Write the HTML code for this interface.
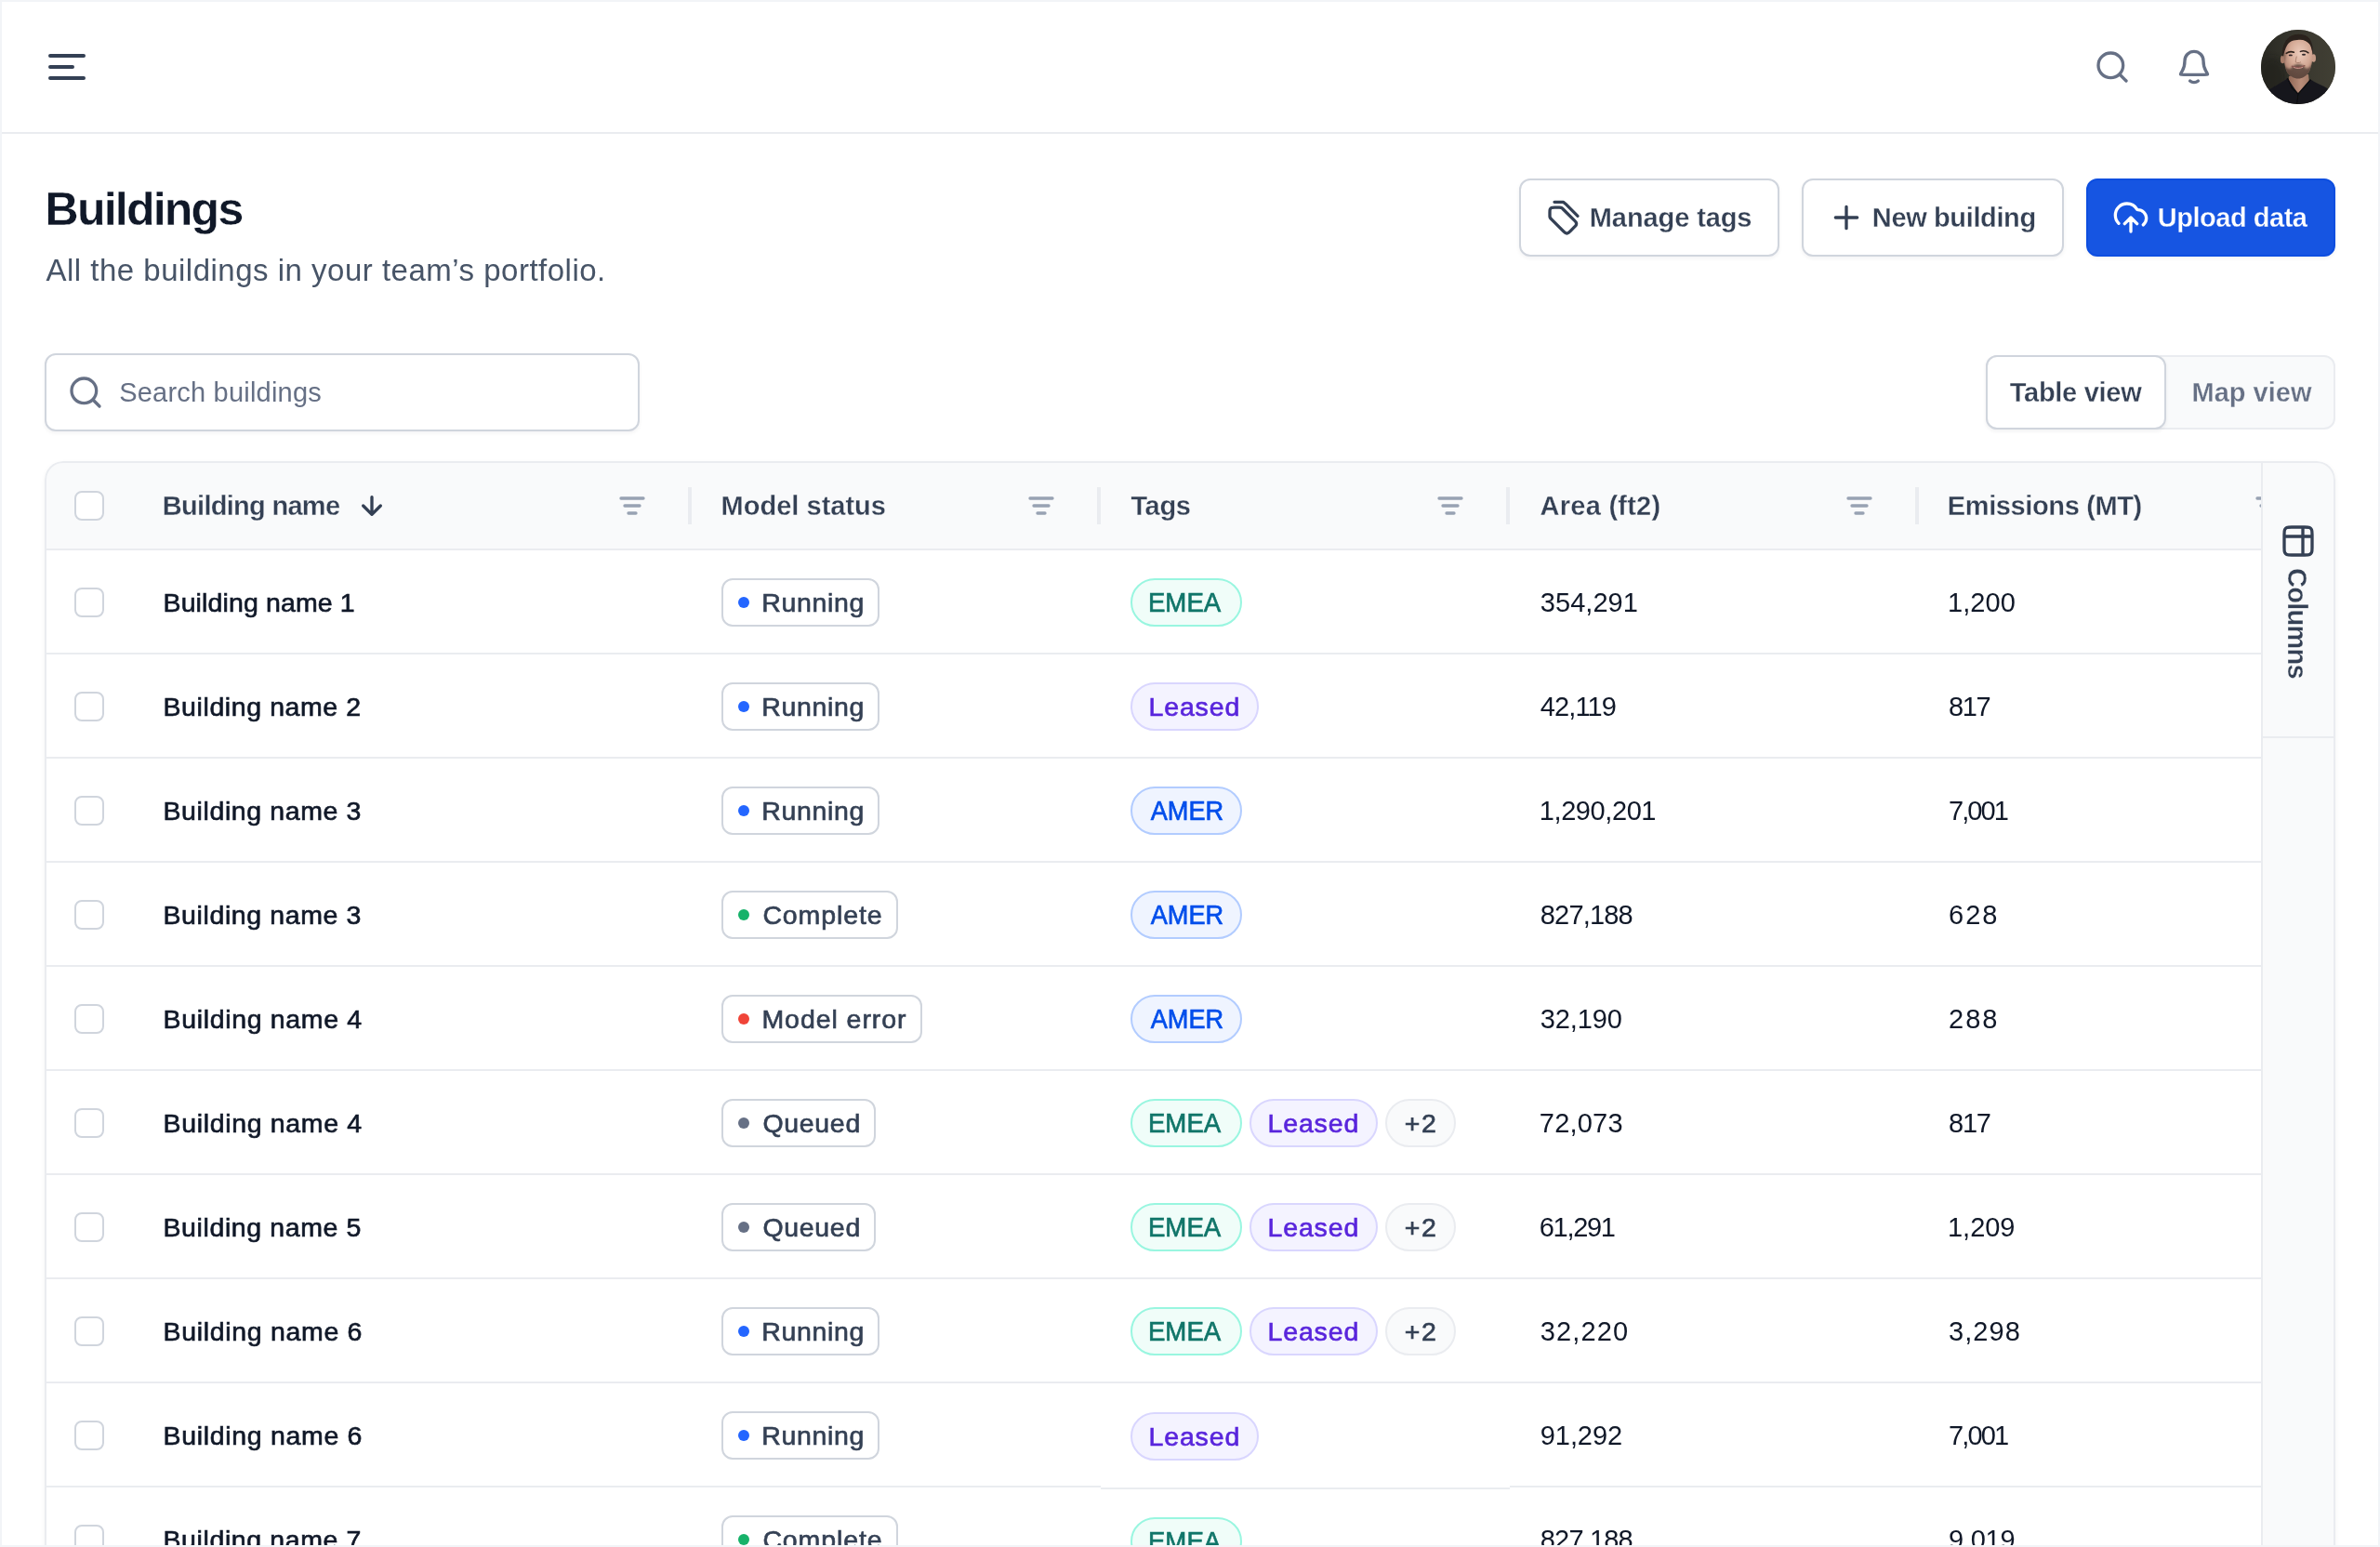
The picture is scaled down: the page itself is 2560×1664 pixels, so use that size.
<!DOCTYPE html>
<html lang="en">
<head>
<meta charset="utf-8">
<title>Buildings</title>
<style>
*{box-sizing:border-box;margin:0;padding:0}
html,body{width:2560px;height:1664px;overflow:hidden;background:#fff}
body{font-family:"Liberation Sans",Arial,sans-serif;color:#101828;-webkit-font-smoothing:antialiased}
.frame{position:absolute;left:0;top:0;width:2560px;height:1664px;overflow:hidden;background:#fff;will-change:transform}
.frame::after{content:"";position:absolute;left:0;top:0;right:0;bottom:0;border:2px solid #F2F4F7;pointer-events:none;z-index:50}
.abs{position:absolute}
svg{display:block;overflow:visible}
.ico{position:absolute;fill:none;stroke-linecap:round;stroke-linejoin:round}
.hline{position:absolute;left:2px;top:142px;width:2556px;height:2px;background:#EAECF0}
.avatar{position:absolute;left:2432px;top:32px;width:80px;height:80px;border-radius:50%;overflow:hidden;background:#3a392f}
h1{position:absolute;left:48px;top:191px;font-size:50px;line-height:68px;font-weight:700;color:#101828;white-space:nowrap}
.sub{position:absolute;left:48px;top:267px;font-size:33px;line-height:48px;color:#475467;white-space:nowrap}
.btn{position:absolute;top:192px;height:84px;border:2px solid #D0D5DD;border-radius:12px;background:#fff;box-shadow:0 2px 4px rgba(16,24,40,.05);font-size:29px;font-weight:700;color:#344054;line-height:80px;white-space:nowrap}
.btn svg{position:absolute;left:26px;top:20px;width:40px;height:40px;stroke:#344054;stroke-width:2;fill:none;stroke-linecap:round;stroke-linejoin:round}
.btn .bt{position:absolute;left:74px;top:0}
.btn.pri{background:#1655E2;border-color:#0D4EE0;color:#fff}
.btn.pri svg{stroke:#fff}
.search{position:absolute;left:48px;top:380px;width:640px;height:84px;border:2px solid #D0D5DD;border-radius:12px;background:#fff;box-shadow:0 2px 4px rgba(16,24,40,.05)}
.search svg{position:absolute;left:22px;top:20px;width:40px;height:40px;stroke:#667085;stroke-width:2;fill:none;stroke-linecap:round;stroke-linejoin:round}
.search .st{position:absolute;left:78px;top:0;font-size:29px;line-height:80px;color:#667085;white-space:nowrap}
.toggle{position:absolute;left:2136px;top:382px;width:376px;height:80px;border:2px solid #EAECF0;border-radius:12px;background:#F9FAFB;font-size:29px;font-weight:700;line-height:80px;white-space:nowrap}
.toggle .on{position:absolute;left:-2px;top:-2px;width:194px;height:80px;border:2px solid #D0D5DD;border-radius:12px;background:#fff;box-shadow:0 2px 4px rgba(16,24,40,.06);color:#344054;text-align:center;line-height:76px}
.toggle .off{position:absolute;left:192px;top:-2px;width:182px;height:80px;color:#667085;text-align:center}
.table{position:absolute;left:48px;top:496px;width:2464px;height:1200px;border-radius:20px 20px 0 0;overflow:hidden;background:#fff;box-shadow:0 2px 5px rgba(16,24,40,.05)}
.table::after{content:"";position:absolute;left:0;top:0;right:0;bottom:0;border:2px solid #EAECF0;border-radius:20px 20px 0 0;pointer-events:none;z-index:20}
.thead{position:absolute;left:2px;top:2px;width:2460px;height:92px;background:#F9FAFB}
.thead .bb{position:absolute;left:0;top:92px;width:2382px;height:2px;background:#EAECF0}
.th{position:absolute;top:0;height:92px;line-height:92px;font-size:29px;font-weight:700;color:#344054;white-space:nowrap}
.sep{position:absolute;top:26px;width:4px;height:40px;background:#EAECF0}
.filt{position:absolute;top:30px;width:32px;height:32px;stroke:#98A2B3;stroke-width:2.5;fill:none;stroke-linecap:round;stroke-linejoin:round}
.cb{position:absolute;left:32px;width:32px;height:32px;border:2px solid #D0D5DD;border-radius:8px;background:#fff}
.row{position:absolute;left:0;width:2464px;height:112px;font-size:29px;color:#101828;white-space:nowrap}
.row::after{content:"";position:absolute;left:2px;top:110px;width:2382px;height:2px;background:#EAECF0}
.row .cb{top:40px}
.c{position:absolute;top:0;height:112px;line-height:112px}
.name{left:128px;font-size:28.5px;-webkit-text-stroke:.65px #101828}
.stat{left:728px}
.tags{left:1168px}
.area{left:1608px}
.em{left:2048px}
.badge{position:absolute;left:0;top:30px;height:52px;border:2px solid #D0D5DD;border-radius:12px;background:#fff;line-height:48px;padding-left:43px;color:#344054;font-size:28.5px;-webkit-text-stroke:.65px #344054}
.dot{position:absolute;left:16px;top:18px;width:12px;height:12px;border-radius:50%}
.dot.blue{background:#2466FF}.dot.green{background:#17B26A}.dot.red{background:#F04438}.dot.gray{background:#667085}
.tags{display:flex;align-items:center;gap:8px}
.tag{display:block;height:52px;border-radius:26px;border:2px solid;line-height:48px;text-align:center;font-size:28.5px;-webkit-text-stroke:.65px}
.t-emea{background:#F0FDF9;border-color:#99F6E0;color:#107569;font-size:29px}
.t-leased{background:#F4F3FF;border-color:#D9D6FE;color:#5925DC}
.t-amer{background:#EFF4FF;border-color:#B2CCFF;color:#004EEB;font-size:29px}
.t-more{background:#F9FAFB;border-color:#EAECF0;color:#344054}
.row.tall .tags{height:114px;line-height:114px;z-index:3}
.row.tall .tags::after{content:"";position:absolute;left:-32px;top:108px;width:440px;height:6px;background:linear-gradient(#fff 0,#fff 2px,#fff 2px,#fff 4px,#EAECF0 4px,#EAECF0 6px)}
.row.shift .tags{top:2px}
.side{position:absolute;left:2384px;top:2px;width:78px;height:1200px;background:#F9FAFB;border-left:2px solid #EAECF0;z-index:10}
.side .tabb{position:absolute;left:0;top:294px;width:76px;height:2px;background:#EAECF0}
.side svg{position:absolute;left:18px;top:64px;width:40px;height:40px;stroke:#344054;stroke-width:2;fill:none;stroke-linecap:round;stroke-linejoin:round}
.side .vt{position:absolute;left:18.5px;top:113px;width:36px;writing-mode:vertical-rl;font-size:29px;font-weight:700;color:#344054;line-height:36px;white-space:nowrap}
h1{-webkit-text-stroke:.35px #fff}
.btn{-webkit-text-stroke:.3px #fff}
.btn.pri{-webkit-text-stroke:.3px #1655E2}
.toggle .on{-webkit-text-stroke:.3px #fff}
.toggle .off{-webkit-text-stroke:.3px #F9FAFB}
.th,.side .vt{-webkit-text-stroke:.3px #F9FAFB}

</style>
</head>
<body>
<div class="frame">
<svg class="ico" style="left:48px;top:48px;width:48px;height:48px;stroke:#344054;stroke-width:2" viewBox="0 0 24 24"><path d="M3 12H15M3 6H21M3 18H21"/></svg>
<svg class="ico" style="left:2252px;top:52px;width:40px;height:40px;stroke:#667085;stroke-width:2" viewBox="0 0 24 24"><path d="M21 21L16.65 16.65M19 11C19 15.4183 15.4183 19 11 19C6.58172 19 3 15.4183 3 11C3 6.58172 6.58172 3 11 3C15.4183 3 19 6.58172 19 11Z"/></svg>
<svg class="ico" style="left:2340px;top:52px;width:40px;height:40px;stroke:#667085;stroke-width:2" viewBox="0 0 24 24"><path d="M9.35419 21C10.0593 21.6224 10.9856 22 12 22C13.0144 22 13.9407 21.6224 14.6458 21M18 8C18 6.4087 17.3679 4.88258 16.2426 3.75736C15.1174 2.63214 13.5913 2 12 2C10.4087 2 8.88258 2.63214 7.75736 3.75736C6.63214 4.88258 6 6.4087 6 8C6 11.0902 5.22047 13.206 4.34966 14.6054C3.61513 15.7859 3.24786 16.3761 3.26132 16.5408C3.27624 16.7231 3.31486 16.7926 3.46178 16.9016C3.59446 17 4.19259 17 5.38885 17H18.6112C19.8074 17 20.4055 17 20.5382 16.9016C20.6851 16.7926 20.7238 16.7231 20.7387 16.5408C20.7521 16.3761 20.3849 15.7859 19.6503 14.6054C18.7795 13.206 18 11.0902 18 8Z"/></svg>
<div class="avatar">
<svg width="80" height="80" viewBox="0 0 80 80">
<defs>
<linearGradient id="abg" x1="0" y1="0" x2="1" y2="0"><stop offset="0" stop-color="#292923"/><stop offset=".45" stop-color="#37362d"/><stop offset="1" stop-color="#413f34"/></linearGradient>
<radialGradient id="ask" cx=".56" cy=".36" r=".72"><stop offset="0" stop-color="#ecccbc"/><stop offset=".5" stop-color="#d5aa96"/><stop offset="1" stop-color="#9a7160"/></radialGradient>
<linearGradient id="ank" x1="0" y1="0" x2="1" y2="0"><stop offset="0" stop-color="#8c6453"/><stop offset=".6" stop-color="#b98d79"/><stop offset="1" stop-color="#a27966"/></linearGradient>
<filter id="af1" x="-20%" y="-20%" width="140%" height="140%"><feGaussianBlur stdDeviation=".55"/></filter>
<filter id="af2" x="-30%" y="-30%" width="160%" height="160%"><feGaussianBlur stdDeviation="1.3"/></filter>
<filter id="af3" x="-30%" y="-30%" width="160%" height="160%"><feGaussianBlur stdDeviation="3"/></filter>
<clipPath id="afc"><path d="M24.5 28C24 18 29 10 40 10C51 10 55.5 17 55.5 27C55.5 33 54.5 39 52 44.5C49 50 44.5 52.5 40 52.5C35.5 52.5 30.5 50 27.5 44.5C25.5 40 24.8 34 24.5 28Z"/></clipPath>
</defs>
<rect width="80" height="80" fill="url(#abg)"/>
<ellipse cx="12" cy="52" rx="16" ry="22" fill="#22221d" opacity=".7" filter="url(#af3)"/>
<g filter="url(#af1)">
<path d="M30 50L29 58L40 70L52 57L51 48Z" fill="url(#ank)"/>
<path d="M4 68C10 62 22 58 28.5 52L40 69L53.5 53.5C60 58 70 61 77 67L80 84H0Z" fill="#17181d"/>
<path d="M28.5 52L33 62L40 69L38.5 80M53.5 53.5L47 61L40 69" stroke="#0b0c10" stroke-width="1.3" fill="none"/>
<ellipse cx="23.3" cy="32" rx="2.4" ry="4.3" fill="#a67b69"/>
<ellipse cx="56.6" cy="30.5" rx="2.4" ry="4.3" fill="#c79c88"/>
<path d="M24.5 28C24 18 29 10 40 10C51 10 55.5 17 55.5 27C55.5 33 54.5 39 52 44.5C49 50 44.5 52.5 40 52.5C35.5 52.5 30.5 50 27.5 44.5C25.5 40 24.8 34 24.5 28Z" fill="url(#ask)"/>
</g>
<g clip-path="url(#afc)">
<g filter="url(#af2)">
<path d="M24 36C26 41 29 43 32 42C34 38.5 37 37 40 37C43 37 46 38 48 41.5C51 42.5 54 40 56 34L56 56L24 56Z" fill="#4b3830" opacity=".78"/>
<path d="M24 20L24 36C26 34 26.5 30 26.5 26Z" fill="#6b4c3f" opacity=".7"/>
</g>
</g>
<g filter="url(#af1)">
<path d="M23.2 29.5C22 17 27 4.8 41 4.8C52 4.8 56.8 13 55.6 27C55 22 54 18.5 52.5 15.5C49 12 46 10.5 41 10.8C35 11 31 12.5 28.5 16C26 19.5 25 25 23.2 29.5Z" fill="#2a201b"/>
<path d="M27.2 25.4C29.5 23.6 32.5 23.2 35.4 24.2M42.4 23.4C45.3 22.3 48.5 22.8 51 24.8" stroke="#2f221c" stroke-width="1.5" fill="none" stroke-linecap="round"/>
<ellipse cx="31.8" cy="27.4" rx="2.1" ry=".95" fill="#33282a"/><ellipse cx="46" cy="26.8" rx="2.1" ry=".95" fill="#33282a"/>
<path d="M38.2 29C37.6 32 37 33.8 37.4 35C38.6 35.8 41.2 35.8 42.6 35" stroke="#a9806e" stroke-width="1" fill="none" stroke-linecap="round"/>
<path d="M33.4 39.4C37 41.2 43 41 46.8 38.7" stroke="#8a5650" stroke-width="1.5" fill="none" stroke-linecap="round"/>
<path d="M35.5 40.6C38.5 42 42 41.8 44.8 40.4" stroke="#c9968c" stroke-width="1" fill="none" stroke-linecap="round"/>
</g>
</svg>
</div>
<div class="hline"></div>
<h1><span style="letter-spacing:-1.77px;position:relative;left:0.6px;">Buildings</span></h1>
<div class="sub"><span style="letter-spacing:0.50px;position:relative;left:1.4px;">All the buildings in your team’s portfolio.</span></div>
<div class="btn" style="left:1634px;width:280px">
<svg viewBox="0 0 24 24"><path d="M21 11L13.4059 3.40589C12.887 2.88703 12.6276 2.6276 12.3249 2.44208C12.0564 2.27759 11.7638 2.15638 11.4577 2.08289C11.1124 2 10.7455 2 10.0118 2L6 2M3 8.7L3 10.6745C3 11.1637 3 11.4083 3.05526 11.6385C3.10425 11.8425 3.18506 12.0376 3.29472 12.2166C3.4184 12.4184 3.59135 12.5914 3.93726 12.9373L11.7373 20.7373C12.5293 21.5293 12.9253 21.9253 13.382 22.0737C13.7837 22.2042 14.2163 22.2042 14.618 22.0737C15.0747 21.9253 15.4707 21.5293 16.2627 20.7373L18.7373 18.2627C19.5293 17.4707 19.9253 17.0747 20.0737 16.618C20.2042 16.2163 20.2042 15.7837 20.0737 15.382C19.9253 14.9253 19.5293 14.5293 18.7373 13.7373L11.4373 6.43726C11.0914 6.09136 10.9184 5.9184 10.7166 5.79472C10.5376 5.68506 10.3425 5.60425 10.1385 5.55526C9.90829 5.5 9.66369 5.5 9.17452 5.5H6.2C5.0799 5.5 4.51984 5.5 4.09202 5.71799C3.7157 5.90973 3.40973 6.21569 3.21799 6.59202C3 7.01984 3 7.57989 3 8.7Z"/></svg>
<span class="bt"><span style="letter-spacing:-0.10px;position:relative;left:-0.2px;">Manage tags</span></span></div>
<div class="btn" style="left:1938px;width:282px">
<svg viewBox="0 0 24 24"><path d="M12 5V19M5 12H19"/></svg>
<span class="bt"><span style="letter-spacing:-0.37px;position:relative;left:-0.2px;">New building</span></span></div>
<div class="btn pri" style="left:2244px;width:268px">
<svg viewBox="0 0 24 24"><path d="M8 16L12 12M12 12L16 16M12 12V21M20 16.7428C21.2215 15.734 22 14.2079 22 12.5C22 9.46243 19.5376 7 16.5 7C16.2815 7 16.0771 6.886 15.9661 6.69774C14.6621 4.48484 12.2544 3 9.5 3C5.35786 3 2 6.35786 2 10.5C2 12.5661 2.83545 14.4371 4.18695 15.7935"/></svg>
<span class="bt"><span style="letter-spacing:-0.48px;position:relative;left:0.8px;">Upload data</span></span></div>
<div class="search">
<svg viewBox="0 0 24 24"><path d="M21 21L16.65 16.65M19 11C19 15.4183 15.4183 19 11 19C6.58172 19 3 15.4183 3 11C3 6.58172 6.58172 3 11 3C15.4183 3 19 6.58172 19 11Z"/></svg>
<span class="st"><span style="letter-spacing:0.21px;position:relative;left:0.2px;">Search buildings</span></span></div>
<div class="toggle"><div class="on"><span style="letter-spacing:-0.29px;position:relative;left:-0.4px;">Table view</span></div><div class="off"><span style="letter-spacing:0.00px;position:relative;left:1.0px;">Map view</span></div></div>
<div class="table">
<div class="thead">
<span class="cb" style="left:30px;top:30px"></span>
<span class="th" style="left:126px"><span style="letter-spacing:-0.71px;position:relative;left:-1.2px;">Building name</span></span>
<svg class="ico" style="left:334px;top:30px;width:32px;height:32px;stroke:#344054;stroke-width:2.5" viewBox="0 0 24 24"><path d="M12 5V19M12 19L19 12M12 19L5 12"/></svg>
<svg class="filt" style="left:614px" viewBox="0 0 24 24"><path d="M6 12H18M3 6H21M9 18H15"/></svg>
<i class="sep" style="left:690px"></i>
<span class="th" style="left:726px"><span style="letter-spacing:0.01px;position:relative;left:-0.4px;">Model status</span></span>
<svg class="filt" style="left:1054px" viewBox="0 0 24 24"><path d="M6 12H18M3 6H21M9 18H15"/></svg>
<i class="sep" style="left:1130px"></i>
<span class="th" style="left:1166px"><span style="letter-spacing:-0.35px;position:relative;left:0.4px;">Tags</span></span>
<svg class="filt" style="left:1494px" viewBox="0 0 24 24"><path d="M6 12H18M3 6H21M9 18H15"/></svg>
<i class="sep" style="left:1570px"></i>
<span class="th" style="left:1606px"><span style="letter-spacing:0.25px;position:relative;left:0.6px;">Area (ft2)</span></span>
<svg class="filt" style="left:1934px" viewBox="0 0 24 24"><path d="M6 12H18M3 6H21M9 18H15"/></svg>
<i class="sep" style="left:2010px"></i>
<span class="th" style="left:2046px"><span style="letter-spacing:-0.38px;position:relative;left:-1.2px;">Emissions (MT)</span></span>
<svg class="filt" style="left:2374px" viewBox="0 0 24 24"><path d="M6 12H18M3 6H21M9 18H15"/></svg>
<div class="bb"></div>
</div>
<div class="row" style="top:96px">
  <span class="cb"></span>
  <span class="c name"><span style="letter-spacing:0.13px;position:relative;left:-0.5px;">Building name 1</span></span>
  <span class="c stat"><span class="badge" style="width:170px"><i class="dot blue"></i><span style="letter-spacing:0.65px;position:relative;left:-1.8px;">Running</span></span></span>
  <span class="c tags"><span class="tag t-emea" style="width:120px"><span style="letter-spacing:0.00px;position:relative;left:-2.3px;display:inline-block;transform:scaleX(0.953);">EMEA</span></span></span>
  <span class="c area"><span style="letter-spacing:0.04px;position:relative;left:0.8px;">354,291</span></span>
  <span class="c em"><span style="letter-spacing:0.07px;position:relative;left:-1.0px;">1,200</span></span>
</div>
<div class="row" style="top:208px">
  <span class="cb"></span>
  <span class="c name"><span style="letter-spacing:0.59px;position:relative;left:-0.5px;">Building name 2</span></span>
  <span class="c stat"><span class="badge" style="width:170px"><i class="dot blue"></i><span style="letter-spacing:0.65px;position:relative;left:-1.8px;">Running</span></span></span>
  <span class="c tags"><span class="tag t-leased" style="width:138px"><span style="letter-spacing:0.84px;position:relative;left:-0.2px;">Leased</span></span></span>
  <span class="c area"><span style="letter-spacing:-0.88px;position:relative;left:0.8px;">42,119</span></span>
  <span class="c em"><span style="letter-spacing:-1.40px;">817</span></span>
</div>
<div class="row" style="top:320px">
  <span class="cb"></span>
  <span class="c name"><span style="letter-spacing:0.61px;position:relative;left:-0.5px;">Building name 3</span></span>
  <span class="c stat"><span class="badge" style="width:170px"><i class="dot blue"></i><span style="letter-spacing:0.65px;position:relative;left:-1.8px;">Running</span></span></span>
  <span class="c tags"><span class="tag t-amer" style="width:120px"><span style="letter-spacing:0.00px;position:relative;left:0.8px;display:inline-block;transform:scaleX(0.937);">AMER</span></span></span>
  <span class="c area"><span style="letter-spacing:-0.42px;position:relative;left:-0.2px;">1,290,201</span></span>
  <span class="c em"><span style="letter-spacing:-1.91px;">7,001</span></span>
</div>
<div class="row" style="top:432px">
  <span class="cb"></span>
  <span class="c name"><span style="letter-spacing:0.61px;position:relative;left:-0.5px;">Building name 3</span></span>
  <span class="c stat"><span class="badge" style="width:190px"><i class="dot green"></i><span style="letter-spacing:0.88px;position:relative;left:-0.6px;">Complete</span></span></span>
  <span class="c tags"><span class="tag t-amer" style="width:120px"><span style="letter-spacing:0.00px;position:relative;left:0.8px;display:inline-block;transform:scaleX(0.937);">AMER</span></span></span>
  <span class="c area"><span style="letter-spacing:-0.83px;position:relative;left:0.8px;">827,188</span></span>
  <span class="c em"><span style="letter-spacing:2.00px;">628</span></span>
</div>
<div class="row" style="top:544px">
  <span class="cb"></span>
  <span class="c name"><span style="letter-spacing:0.66px;position:relative;left:-0.5px;">Building name 4</span></span>
  <span class="c stat"><span class="badge" style="width:216px"><i class="dot red"></i><span style="letter-spacing:0.94px;position:relative;left:-1.6px;">Model error</span></span></span>
  <span class="c tags"><span class="tag t-amer" style="width:120px"><span style="letter-spacing:0.00px;position:relative;left:0.8px;display:inline-block;transform:scaleX(0.937);">AMER</span></span></span>
  <span class="c area"><span style="letter-spacing:-0.12px;position:relative;left:0.8px;">32,190</span></span>
  <span class="c em"><span style="letter-spacing:2.00px;">288</span></span>
</div>
<div class="row" style="top:656px">
  <span class="cb"></span>
  <span class="c name"><span style="letter-spacing:0.66px;position:relative;left:-0.5px;">Building name 4</span></span>
  <span class="c stat"><span class="badge" style="width:166px"><i class="dot gray"></i><span style="letter-spacing:0.68px;position:relative;left:-0.6px;">Queued</span></span></span>
  <span class="c tags"><span class="tag t-emea" style="width:120px"><span style="letter-spacing:0.00px;position:relative;left:-2.3px;display:inline-block;transform:scaleX(0.953);">EMEA</span></span><span class="tag t-leased" style="width:138px"><span style="letter-spacing:0.84px;position:relative;left:-0.2px;">Leased</span></span><span class="tag t-more" style="width:76px"><span style="letter-spacing:1.60px;position:relative;left:0.6px;">+2</span></span></span>
  <span class="c area"><span style="letter-spacing:0.20px;position:relative;left:-0.2px;">72,073</span></span>
  <span class="c em"><span style="letter-spacing:-1.20px;">817</span></span>
</div>
<div class="row" style="top:768px">
  <span class="cb"></span>
  <span class="c name"><span style="letter-spacing:0.61px;position:relative;left:-0.5px;">Building name 5</span></span>
  <span class="c stat"><span class="badge" style="width:166px"><i class="dot gray"></i><span style="letter-spacing:0.68px;position:relative;left:-0.6px;">Queued</span></span></span>
  <span class="c tags"><span class="tag t-emea" style="width:120px"><span style="letter-spacing:0.00px;position:relative;left:-2.3px;display:inline-block;transform:scaleX(0.953);">EMEA</span></span><span class="tag t-leased" style="width:138px"><span style="letter-spacing:0.84px;position:relative;left:-0.2px;">Leased</span></span><span class="tag t-more" style="width:76px"><span style="letter-spacing:1.60px;position:relative;left:0.6px;">+2</span></span></span>
  <span class="c area"><span style="letter-spacing:-1.32px;position:relative;left:-0.2px;">61,291</span></span>
  <span class="c em"><span style="letter-spacing:-0.03px;position:relative;left:-1.0px;">1,209</span></span>
</div>
<div class="row" style="top:880px">
  <span class="cb"></span>
  <span class="c name"><span style="letter-spacing:0.68px;position:relative;left:-0.5px;">Building name 6</span></span>
  <span class="c stat"><span class="badge" style="width:170px"><i class="dot blue"></i><span style="letter-spacing:0.65px;position:relative;left:-1.8px;">Running</span></span></span>
  <span class="c tags"><span class="tag t-emea" style="width:120px"><span style="letter-spacing:0.00px;position:relative;left:-2.3px;display:inline-block;transform:scaleX(0.953);">EMEA</span></span><span class="tag t-leased" style="width:138px"><span style="letter-spacing:0.84px;position:relative;left:-0.2px;">Leased</span></span><span class="tag t-more" style="width:76px"><span style="letter-spacing:1.60px;position:relative;left:0.6px;">+2</span></span></span>
  <span class="c area"><span style="letter-spacing:1.12px;position:relative;left:0.8px;">32,220</span></span>
  <span class="c em"><span style="letter-spacing:1.07px;">3,298</span></span>
</div>
<div class="row tall" style="top:992px">
  <span class="cb"></span>
  <span class="c name"><span style="letter-spacing:0.68px;position:relative;left:-0.5px;">Building name 6</span></span>
  <span class="c stat"><span class="badge" style="width:170px"><i class="dot blue"></i><span style="letter-spacing:0.65px;position:relative;left:-1.8px;">Running</span></span></span>
  <span class="c tags"><span class="tag t-leased" style="width:138px"><span style="letter-spacing:0.84px;position:relative;left:-0.2px;">Leased</span></span></span>
  <span class="c area"><span style="letter-spacing:-0.08px;position:relative;left:0.8px;">91,292</span></span>
  <span class="c em"><span style="letter-spacing:-1.84px;">7,001</span></span>
</div>
<div class="row shift" style="top:1104px">
  <span class="cb"></span>
  <span class="c name"><span style="letter-spacing:0.61px;position:relative;left:-0.5px;">Building name 7</span></span>
  <span class="c stat"><span class="badge" style="width:190px"><i class="dot green"></i><span style="letter-spacing:0.88px;position:relative;left:-0.6px;">Complete</span></span></span>
  <span class="c tags"><span class="tag t-emea" style="width:120px"><span style="letter-spacing:0.00px;position:relative;left:-2.3px;display:inline-block;transform:scaleX(0.953);">EMEA</span></span></span>
  <span class="c area"><span style="letter-spacing:-0.83px;position:relative;left:0.8px;">827,188</span></span>
  <span class="c em"><span style="letter-spacing:-0.25px;">9,019</span></span>
</div>
<div class="side">
<svg viewBox="0 0 24 24"><path d="M3 9H21M15 3V21M7.8 3H16.2C17.8802 3 18.7202 3 19.362 3.32698C19.9265 3.6146 20.3854 4.07354 20.673 4.63803C21 5.27976 21 6.11984 21 7.8V16.2C21 17.8802 21 18.7202 20.673 19.362C20.3854 19.9265 19.9265 20.3854 19.362 20.673C18.7202 21 17.8802 21 16.2 21H7.8C6.11984 21 5.27976 21 4.63803 20.673C4.07354 20.3854 3.6146 19.9265 3.32698 19.362C3 18.7202 3 17.8802 3 16.2V7.8C3 6.11984 3 5.27976 3.32698 4.63803C3.6146 4.07354 4.07354 3.6146 4.63803 3.32698C5.27976 3 6.11984 3 7.8 3Z"/></svg>
<div class="vt"><span style="letter-spacing:-0.73px;">Columns</span></div>
<div class="tabb"></div>
</div>
</div>
</div>
</body>
</html>
